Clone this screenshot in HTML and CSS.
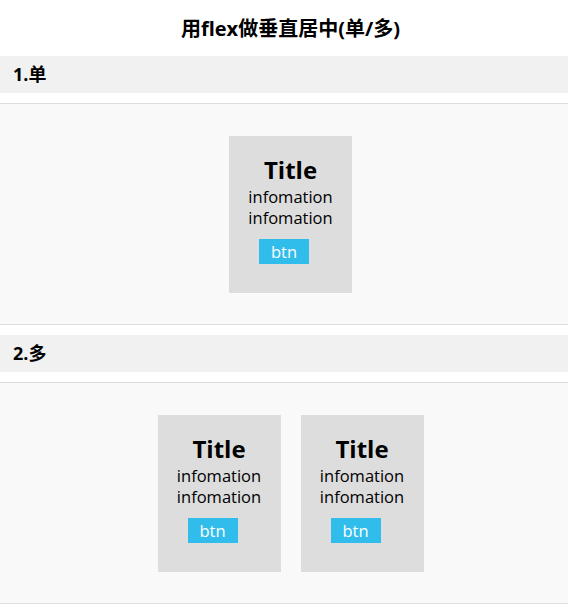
FILE: index.html
```html
<!DOCTYPE html>
<html lang="zh">
<head>
<meta charset="utf-8">
<title>flex</title>
<link rel="stylesheet" href="styles.css">
</head>
<body>
<h1 class="page-title">用flex做垂直居中(单/多)</h1>
<h2 class="section-head">1.单</h2>
<div class="panel">
  <div class="card">
    <div class="card-title">Title</div>
    <div class="card-info">infomation</div>
    <div class="card-info">infomation</div>
    <div class="btn">btn</div>
  </div>
</div>
<h2 class="section-head">2.多</h2>
<div class="panel">
  <div class="card">
    <div class="card-title">Title</div>
    <div class="card-info">infomation</div>
    <div class="card-info">infomation</div>
    <div class="btn">btn</div>
  </div>
  <div class="card">
    <div class="card-title">Title</div>
    <div class="card-info">infomation</div>
    <div class="card-info">infomation</div>
    <div class="btn">btn</div>
  </div>
</div>
</body>
</html>
```
FILE: styles.css
```css
html, body {
  margin: 0;
  padding: 0;
  background: #fff;
  font-family: "Open Sans", "Noto Sans CJK SC", sans-serif;
  color: #000;
}
.page-title {
  margin: 0;
  height: 56px;
  line-height: 57px;
  padding-left: 13px;
  font-size: 20px;
  font-weight: bold;
  text-align: center;
}
.section-head {
  margin: 0 0 10px;
  height: 37px;
  line-height: 37px;
  padding-left: 13px;
  font-size: 18px;
  font-weight: bold;
  background: #f1f1f1;
}
.panel {
  display: flex;
  justify-content: center;
  align-items: center;
  height: 220px;
  padding-left: 13px;
  background: #f9f9f9;
  border-top: 1px solid #dddddd;
  border-bottom: 1px solid #dddddd;
  margin-bottom: 10px;
}
.card {
  box-sizing: border-box;
  width: 123px;
  height: 157px;
  margin: 0 10px;
  padding-top: 18px;
  background: #dddddd;
  text-align: center;
}
.card-title {
  font-size: 24px;
  font-weight: bold;
  line-height: 32px;
}
.card-info {
  font-size: 16.5px;
  line-height: 21px;
}
.btn {
  width: 50px;
  height: 25px;
  line-height: 25px;
  margin: 11px 0 0 30px;
  background: #31bdec;
  color: #fff;
  font-size: 16.5px;
  text-align: center;
}
```
